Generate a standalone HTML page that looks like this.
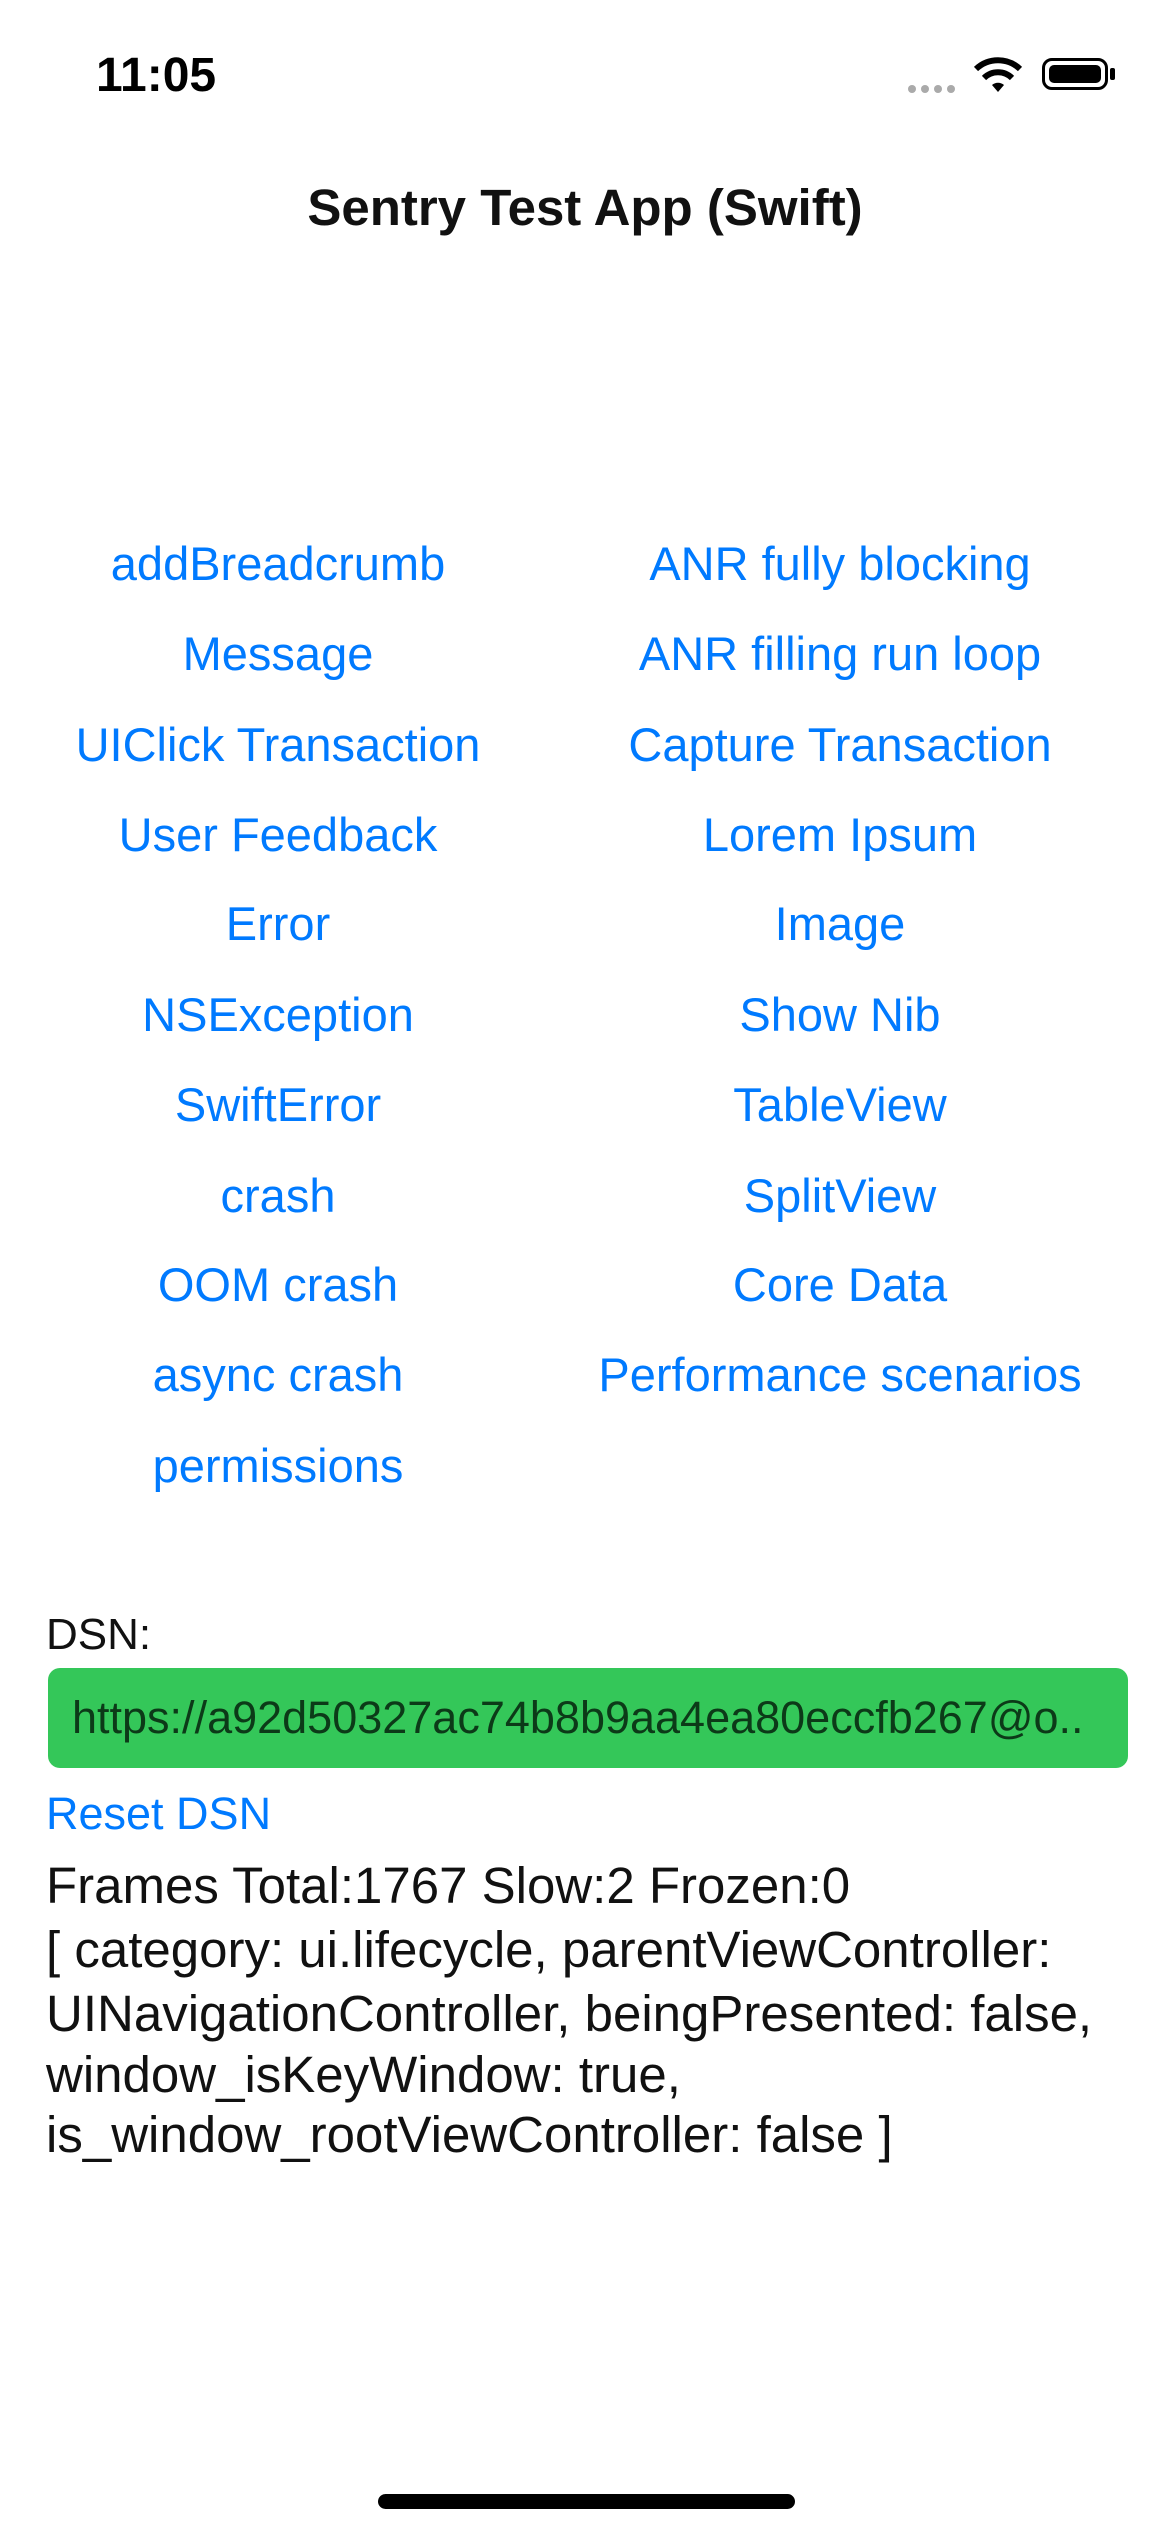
<!DOCTYPE html>
<html><head><meta charset="utf-8"><style>
html,body{margin:0;padding:0;background:#fff;}
body{width:1170px;height:2532px;position:relative;overflow:hidden;font-family:"Liberation Sans",sans-serif;}
.a{position:absolute;white-space:nowrap;}
.btn{position:absolute;color:#007AFF;font-size:47px;transform:translateX(-50%);white-space:nowrap;line-height:54px;}
.t{position:absolute;left:46px;font-size:51px;color:#111;line-height:60px;white-space:nowrap;}
</style></head><body>
<div class="a" style="left:96px;top:48px;font-size:48px;font-weight:bold;color:#000;">11:05</div>
<div class="a" style="left:908px;top:80px;">
 <span style="display:inline-block;width:8px;height:8px;border-radius:4px;background:#aaa;margin-right:5px"></span><span style="display:inline-block;width:8px;height:8px;border-radius:4px;background:#aaa;margin-right:5px"></span><span style="display:inline-block;width:8px;height:8px;border-radius:4px;background:#aaa;margin-right:5px"></span><span style="display:inline-block;width:8px;height:8px;border-radius:4px;background:#aaa;"></span>
</div>
<svg class="a" style="left:972px;top:54px" width="52" height="40" viewBox="0 0 52 40"><path d="M26 38 L20 31 A9 9 0 0 1 32 31 Z" fill="#000"/><path d="M12 24 A20 20 0 0 1 40 24" stroke="#000" stroke-width="6" fill="none"/><path d="M4 15 A32 32 0 0 1 48 15" stroke="#000" stroke-width="6" fill="none"/></svg>
<div class="a" style="left:1042px;top:58px;width:66px;height:32px;border:3px solid #000;border-radius:10px;box-sizing:border-box;"><div style="position:absolute;left:4px;top:4px;right:4px;bottom:4px;background:#000;border-radius:5px"></div></div>
<div class="a" style="left:1110px;top:68px;width:5px;height:12px;background:#000;border-radius:2px"></div>
<div class="a" style="left:0;width:1170px;text-align:center;top:178px;font-size:51px;font-weight:bold;color:#111;">Sentry Test App (Swift)</div>

<div class="btn" style="left:278px;top:537px">addBreadcrumb</div>
<div class="btn" style="left:278px;top:627px">Message</div>
<div class="btn" style="left:278px;top:718px">UIClick Transaction</div>
<div class="btn" style="left:278px;top:808px">User Feedback</div>
<div class="btn" style="left:278px;top:897px">Error</div>
<div class="btn" style="left:278px;top:988px">NSException</div>
<div class="btn" style="left:278px;top:1078px">SwiftError</div>
<div class="btn" style="left:278px;top:1169px">crash</div>
<div class="btn" style="left:278px;top:1258px">OOM crash</div>
<div class="btn" style="left:278px;top:1348px">async crash</div>
<div class="btn" style="left:278px;top:1439px">permissions</div>

<div class="btn" style="left:840px;top:537px">ANR fully blocking</div>
<div class="btn" style="left:840px;top:627px">ANR filling run loop</div>
<div class="btn" style="left:840px;top:718px">Capture Transaction</div>
<div class="btn" style="left:840px;top:808px">Lorem Ipsum</div>
<div class="btn" style="left:840px;top:897px">Image</div>
<div class="btn" style="left:840px;top:988px">Show Nib</div>
<div class="btn" style="left:840px;top:1078px">TableView</div>
<div class="btn" style="left:840px;top:1169px">SplitView</div>
<div class="btn" style="left:840px;top:1258px">Core Data</div>
<div class="btn" style="left:840px;top:1348px">Performance scenarios</div>

<div class="a" style="left:46px;top:1610px;font-size:44px;color:#111;">DSN:</div>
<div class="a" style="left:48px;top:1668px;width:1080px;height:100px;background:#34C759;border-radius:12px;"></div>
<div class="a" style="left:72px;top:1692px;font-size:45px;color:#0c3a18;width:1010px;overflow:hidden;">https://a92d50327ac74b8b9aa4ea80eccfb267@o...</div>
<div class="a" style="left:46px;top:1788px;font-size:45px;color:#007AFF;">Reset DSN</div>

<div class="t" style="top:1856px">Frames Total:1767 Slow:2 Frozen:0</div>
<div class="t" style="top:1920px">[ category: ui.lifecycle, parentViewController:</div>
<div class="t" style="top:1984px">UINavigationController, beingPresented: false,</div>
<div class="t" style="top:2045px">window_isKeyWindow: true,</div>
<div class="t" style="top:2105px">is_window_rootViewController: false ]</div>

<div class="a" style="left:378px;top:2494px;width:417px;height:15px;border-radius:8px;background:#000;"></div>
</body></html>
